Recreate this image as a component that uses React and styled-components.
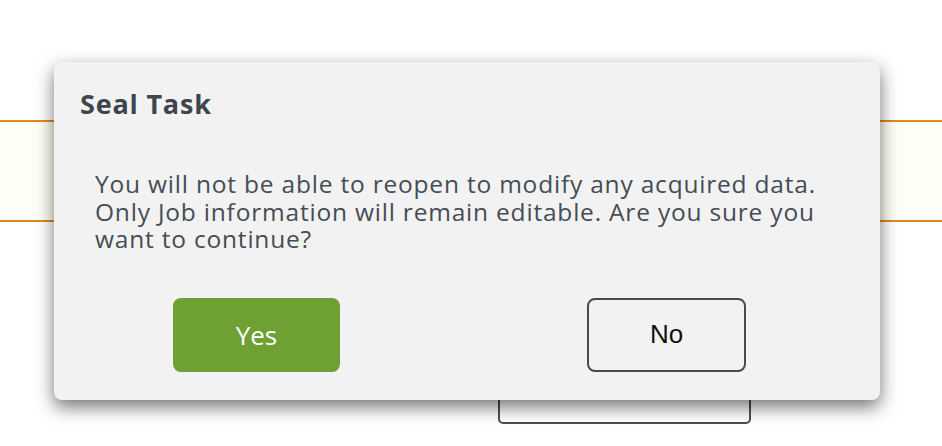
import React from "react";
import styled, { createGlobalStyle } from "styled-components";

const GlobalStyle = createGlobalStyle`
	html, body {
		margin: 0;
		padding: 0;
		background: #ffffff;
	}
	body {
		font-family: "Open Sans", "Liberation Sans", sans-serif;
	}
`;

const Page = styled.div`
	position: relative;
	width: 942px;
	height: 446px;
	overflow: hidden;
	background: #ffffff;
`;

const Backdrop = styled.div`
	display: flex;
	flex-direction: column;
	padding-top: 120px;
`;

const NoticeBand = styled.div`
	height: 98px;
	border-top: 2px solid #dd8a1f;
	border-bottom: 2px solid #dd8a1f;
	background: #fffef6;
`;

const BackActions = styled.div`
	display: flex;
	justify-content: flex-end;
	padding: 102px 191px 0 0;
`;

const GhostButton = styled.button`
	width: 253px;
	height: 100px;
	border: 2px solid #4a5058;
	border-radius: 5px;
	background: #ffffff;
	box-sizing: border-box;
`;

const Dialog = styled.div`
	position: absolute;
	left: 54px;
	top: 62px;
	width: 826px;
	height: 338px;
	box-sizing: border-box;
	padding: 25px 26px 0 26px;
	background: #f2f2f2;
	border-radius: 8px;
	box-shadow: 0 7px 18px rgba(0, 0, 0, 0.55);
	display: flex;
	flex-direction: column;
`;

const Title = styled.h5`
	margin: 0;
	font-size: 27px;
	font-weight: 700;
	line-height: 33px;
	letter-spacing: 0.8px;
	color: #3d464e;
`;

const Message = styled.p`
	margin: 50px 0 0 15px;
	font-size: 24.5px;
	line-height: 27.5px;
	letter-spacing: 0.8px;
	color: #454d55;
	max-width: 735px;
`;

const Footer = styled.div`
	display: flex;
	justify-content: space-between;
	padding: 0 108px 0 93px;
	margin-top: 45px;
`;

const ActionButton = styled.button`
	width: ${(props) => props.$width}px;
	height: 74px;
	box-sizing: border-box;
	border-radius: 8px;
	font-size: 26px;
	cursor: pointer;
	padding: 0;
	font-family: ${(props) =>
		props.$primary
			? `"Open Sans", "Liberation Sans", sans-serif`
			: `"Liberation Sans", Arial, sans-serif`};
	background: ${(props) => (props.$primary ? "#6ea033" : "transparent")};
	color: ${(props) => (props.$primary ? "#ffffff" : "#111111")};
	border: ${(props) => (props.$primary ? "none" : "2px solid #4a4a4a")};
`;

export default function App() {
	return (
		<>
			<GlobalStyle />
			<Page>
				<Backdrop>
					<NoticeBand />
					<BackActions>
						<GhostButton />
					</BackActions>
				</Backdrop>
				<Dialog role="dialog">
					<Title>Seal Task</Title>
					<Message>
						You will not be able to reopen to modify any acquired data. Only Job
						information will remain editable. Are you sure you want to continue?
					</Message>
					<Footer>
						<ActionButton $primary $width={167}>
							Yes
						</ActionButton>
						<ActionButton $width={159}>No</ActionButton>
					</Footer>
				</Dialog>
			</Page>
		</>
	);
}
